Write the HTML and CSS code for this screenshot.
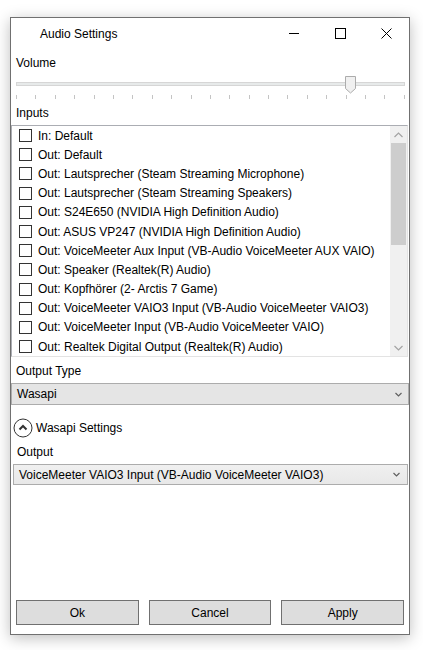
FILE: index.html
```html
<!DOCTYPE html>
<html>
<head>
<meta charset="utf-8">
<link rel="stylesheet" href="styles.css">
</head>
<body>
<div class="window">
  <div class="titlebar">
    <div class="title">Audio Settings</div>
    <div class="caption">
      <div class="cbtn"><svg width="10" height="10" viewBox="0 0 10 10"><path d="M0 5.5H10" stroke="#000" stroke-width="1"/></svg></div>
      <div class="cbtn"><svg width="11" height="11" viewBox="0 0 11 11"><rect x="0.5" y="0.5" width="10" height="10" fill="none" stroke="#000" stroke-width="1"/></svg></div>
      <div class="cbtn"><svg width="11" height="11" viewBox="0 0 11 11"><path d="M0.5 0.5L10.5 10.5M10.5 0.5L0.5 10.5" stroke="#000" stroke-width="1"/></svg></div>
    </div>
  </div>
  <div class="content">
    <div class="label">Volume</div>
    <div class="slider">
      <div class="track"></div>
      <svg class="thumb" width="11" height="18" viewBox="0 0 11 18"><path d="M0.5 0.5H10.5V12.5L5.5 17L0.5 12.5Z" fill="#f0f0f0" stroke="#acacac"/></svg>
      <div class="ticks">
        <i></i><i></i><i></i><i></i><i></i><i></i><i></i><i></i><i></i><i></i><i></i><i></i><i></i><i></i><i></i><i></i><i></i><i></i><i></i><i></i><i></i>
      </div>
    </div>
    <div class="label">Inputs</div>
    <div class="listbox">
      <div class="items">
        <div class="item"><span class="cb"></span>In: Default</div>
        <div class="item"><span class="cb"></span>Out: Default</div>
        <div class="item"><span class="cb"></span>Out: Lautsprecher (Steam Streaming Microphone)</div>
        <div class="item"><span class="cb"></span>Out: Lautsprecher (Steam Streaming Speakers)</div>
        <div class="item"><span class="cb"></span>Out: S24E650 (NVIDIA High Definition Audio)</div>
        <div class="item"><span class="cb"></span>Out: ASUS VP247 (NVIDIA High Definition Audio)</div>
        <div class="item"><span class="cb"></span>Out: VoiceMeeter Aux Input (VB-Audio VoiceMeeter AUX VAIO)</div>
        <div class="item"><span class="cb"></span>Out: Speaker (Realtek(R) Audio)</div>
        <div class="item"><span class="cb"></span>Out: Kopfhörer (2- Arctis 7 Game)</div>
        <div class="item"><span class="cb"></span>Out: VoiceMeeter VAIO3 Input (VB-Audio VoiceMeeter VAIO3)</div>
        <div class="item"><span class="cb"></span>Out: VoiceMeeter Input (VB-Audio VoiceMeeter VAIO)</div>
        <div class="item"><span class="cb"></span>Out: Realtek Digital Output (Realtek(R) Audio)</div>
      </div>
      <div class="scrollbar">
        <div class="sarrow"><svg width="9" height="6" viewBox="0 0 9 6"><path d="M0.5 5L4.5 1L8.5 5" fill="none" stroke="#a3a3a3" stroke-width="1.2"/></svg></div>
        <div class="strack"><div class="sthumb"></div></div>
        <div class="sarrow"><svg width="9" height="6" viewBox="0 0 9 6"><path d="M0.5 1L4.5 5L8.5 1" fill="none" stroke="#a3a3a3" stroke-width="1.2"/></svg></div>
      </div>
    </div>
    <div class="label label-gap">Output Type</div>
    <div class="combo combo-type"><span>Wasapi</span><svg width="7" height="5" viewBox="0 0 7 5"><path d="M0.5 1L3.5 4L6.5 1" fill="none" stroke="#606060" stroke-width="1.2"/></svg></div>
    <div class="expander">
      <div class="exp-head">
        <svg width="20" height="20" viewBox="0 0 20 20"><circle cx="10" cy="10" r="9" fill="#fff" stroke="#333" stroke-width="1"/><path d="M6.5 11.5L10 8L13.5 11.5" fill="none" stroke="#333" stroke-width="2"/></svg>
        <span>Wasapi Settings</span>
      </div>
      <div class="exp-body">
        <div class="label sub">Output</div>
        <div class="combo combo-out"><span>VoiceMeeter VAIO3 Input (VB-Audio VoiceMeeter VAIO3)</span><svg width="7" height="5" viewBox="0 0 7 5"><path d="M0.5 1L3.5 4L6.5 1" fill="none" stroke="#606060" stroke-width="1.2"/></svg></div>
      </div>
    </div>
    <div class="buttons">
      <div class="btn">Ok</div>
      <div class="btn">Cancel</div>
      <div class="btn">Apply</div>
    </div>
  </div>
</div>
</body>
</html>
```
FILE: styles.css
```css
html, body {
  margin: 0;
  padding: 0;
  background: #ffffff;
}
body {
  font-family: "Liberation Sans", Arial, sans-serif;
  font-size: 12px;
  color: #000;
  padding: 17px 0 0 10px;
  height: 650px;
  box-sizing: border-box;
  overflow: hidden;
}
.window {
  width: 400px;
  height: 618px;
  box-sizing: border-box;
  border: 1px solid #707070;
  background: #fff;
  box-shadow: 0 3px 14px rgba(0, 0, 0, 0.26);
  display: flex;
  flex-direction: column;
}
.titlebar {
  height: 30px;
  display: flex;
  align-items: center;
  flex: none;
}
.title {
  padding-left: 29px;
  flex: 1;
  line-height: 16px;
  padding-top: 1px;
}
.caption {
  display: flex;
  height: 30px;
}
.cbtn {
  width: 46px;
  height: 30px;
  display: flex;
  align-items: center;
  justify-content: center;
}
.content {
  flex: 1;
  display: flex;
  flex-direction: column;
}
.label {
  line-height: 16px;
  height: 16px;
  padding-left: 5px;
  margin-top: 7px;
}
.slider {
  position: relative;
  height: 28px;
  margin: 3px 4px 0 5px;
}
.track {
  position: absolute;
  left: 0;
  right: 0;
  top: 8px;
  height: 4px;
  box-sizing: border-box;
  border: 1px solid #d6d6d6;
  background: #e7eaea;
}
.thumb {
  position: absolute;
  top: 2px;
  left: 329px;
}
.ticks {
  position: absolute;
  left: 0;
  right: 0;
  top: 21px;
  height: 4px;
  display: flex;
  justify-content: space-between;
}
.ticks i {
  width: 1px;
  height: 4px;
  background: #c4c4c4;
}
.slider + .label {
  margin-top: 3px;
}
.listbox {
  margin-top: 4px;
  height: 232px;
  box-sizing: border-box;
  border: 1px solid #abadb3;
  border-right-color: #e3e3e3;
  border-bottom-color: #e3e3e3;
  display: flex;
  margin-right: 1px;
}
.items {
  flex: 1;
  padding-top: 0;
}
.item {
  height: 19.2px;
  display: flex;
  align-items: center;
  padding-left: 7px;
  white-space: nowrap;
}
.cb {
  width: 13px;
  height: 13px;
  box-sizing: border-box;
  border: 1px solid #333;
  background: #fff;
  margin-right: 6px;
  flex: none;
}
.scrollbar {
  width: 17px;
  background: #f0f0f0;
  display: flex;
  flex-direction: column;
}
.sarrow {
  height: 17px;
  display: flex;
  align-items: center;
  justify-content: center;
  flex: none;
}
.strack {
  flex: 1;
  padding: 0 1px;
}
.sthumb {
  height: 102px;
  background: #cdcdcd;
}
.label-gap {
  margin-top: 6px;
}
.combo {
  display: flex;
  align-items: center;
  justify-content: space-between;
  box-sizing: border-box;
  border: 1px solid #acacac;
  padding: 0 6px 0 5px;
  white-space: nowrap;
}
.combo-type {
  margin-top: 4px;
  height: 22px;
  background: #e5e5e5;
}
.combo-out {
  margin: 4px 1px 0 2px;
  height: 21px;
  background: linear-gradient(#f0f0f0, #e8e8e8);
  padding-left: 5px;
  padding-right: 7px;
}
.expander {
  margin-top: 13px;
}
.exp-head {
  display: flex;
  align-items: center;
  height: 20px;
  padding-left: 2px;
}
.exp-head span {
  margin-left: 3px;
}
.exp-body .label.sub {
  margin-top: 6px;
  padding-left: 6px;
}
.buttons {
  margin-top: auto;
  margin-bottom: 9px;
  display: grid;
  grid-template-columns: 1fr 1fr 1fr;
  gap: 10px;
  padding: 0 5px;
}
.btn {
  height: 25px;
  box-sizing: border-box;
  border: 1px solid #707070;
  background: #dddddd;
  display: flex;
  align-items: center;
  justify-content: center;
}
```
